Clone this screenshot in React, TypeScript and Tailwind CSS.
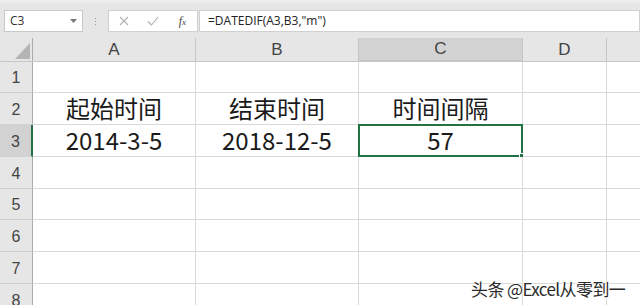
import React from 'react';

const cols = [
  { key: 'A', w: 'w-[163px]' },
  { key: 'B', w: 'w-[163px]' },
  { key: 'C', w: 'w-[164px]' },
  { key: 'D', w: 'w-[84px]' },
  { key: 'E', w: 'flex-1' },
];

const rowHeights = ['h-[31px]', 'h-[32px]', 'h-[32px]', 'h-[32px]', 'h-[31px]', 'h-[32px]', 'h-[32px]', 'h-[32px]'];

const data: Record<string, string> = {
  A2: '起始时间',
  B2: '结束时间',
  C2: '时间间隔',
  A3: '2014-3-5',
  B3: '2018-12-5',
  C3: '57',
};

const font = { fontFamily: '"Noto Sans CJK SC", "Noto Sans", sans-serif' };

const App: React.FC = () => {
  return (
    <div className="w-[640px] h-[305px] overflow-hidden bg-white relative" style={font}>
      {/* FORMULA BAR */}
      <div className="h-[38px] bg-[#e6e6e6] border-t-[3px] border-[#ececec] flex items-start pt-[7px] pl-[4px]">
        <div className="w-[79px] h-[22px] bg-white border border-[#c8c8c8] flex items-center justify-between px-[5px]">
          <span className="text-[12px] text-[#333]" style={{ fontFamily: '"Open Sans", sans-serif' }}>C3</span>
          <svg width="7" height="4" viewBox="0 0 7 4"><path d="M0 0h7L3.5 4z" fill="#777" /></svg>
        </div>
        <div className="w-[25px] h-[22px] flex flex-col items-center justify-center gap-[2px]">
          <span className="w-[1px] h-[1px] bg-[#999]" />
          <span className="w-[1px] h-[1px] bg-[#999]" />
          <span className="w-[1px] h-[1px] bg-[#999]" />
        </div>
        <div className="w-[90px] h-[22px] bg-white border border-[#d0d0d0] flex items-center">
          <div className="w-[30px] flex justify-center">
            <svg width="10" height="10" viewBox="0 0 10 10"><path d="M1 1l8 8M9 1l-8 8" stroke="#b0b0b0" strokeWidth="1.1" /></svg>
          </div>
          <div className="w-[30px] flex justify-center">
            <svg width="12" height="10" viewBox="0 0 12 10"><path d="M1 5.5l3.5 3.5L11 1" stroke="#b0b0b0" strokeWidth="1.1" fill="none" /></svg>
          </div>
          <div className="w-[30px] flex justify-center">
            <span className="text-[12px] italic text-[#444]" style={{ fontFamily: '"Liberation Serif", serif' }}>f<span className="text-[9px]">x</span></span>
          </div>
        </div>
        <div className="ml-[1px] flex-1 h-[22px] bg-white border border-[#d0d0d0] flex items-center pl-[8px]">
          <span className="text-[12px] text-[#222]" style={{ fontFamily: '"Open Sans", sans-serif' }}>=DATEDIF(A3,B3,"m")</span>
        </div>
      </div>

      {/* COLUMN HEADERS */}
      <div className="flex h-[24px] bg-[#e6e6e6] border-b border-[#c6c6c6]">
        <div className="w-[33px] border-r border-[#ababab] flex items-end justify-end pr-[2px] pb-[2px]">
          <svg width="15" height="16" viewBox="0 0 15 16"><path d="M15 0V16H0z" fill="#b4b4b4" /></svg>
        </div>
        {cols.map(c => (
          <div
            key={c.key}
            className={`${c.w} flex items-center justify-center text-[17px] text-[#444] ${
              c.key === 'C' ? 'bg-[#d2d2d2] border-b-2 border-[#217346] -mb-px' : ''
            } ${c.key !== 'E' ? 'border-r border-[#c6c6c6]' : ''}`}
            style={{ fontFamily: '"Liberation Sans", sans-serif' }}
          >
            {c.key !== 'E' ? c.key : ''}
          </div>
        ))}
      </div>

      {/* GRID ROWS */}
      {rowHeights.map((h, i) => {
        const r = i + 1;
        return (
          <div key={r} className={`flex ${h}`}>
            <div
              className={`w-[33px] flex items-end justify-center pb-[2px] text-[16px] text-[#444] border-b border-[#d0d0d0] ${
                r === 3 ? 'bg-[#d2d2d2] border-r-2 border-r-[#217346]' : 'bg-[#e6e6e6] border-r border-r-[#ababab]'
              }`}
              style={{ fontFamily: '"Liberation Sans", sans-serif' }}
            >
              {r}
            </div>
            {cols.map(c => {
              const id = `${c.key}${r}`;
              const selected = id === 'C3';
              return (
                <div
                  key={id}
                  className={`${c.w} relative flex items-end justify-center text-[24px] leading-[32px] text-[#1a1a1a] border-b border-[#d9d9d9] ${
                    c.key !== 'E' ? 'border-r' : ''
                  } border-r-[#d9d9d9]`}
                >
                  {data[id] ?? ''}
                  {selected && (
                    <div className="absolute -left-px -top-px right-[-1px] bottom-[-1px] border-2 border-[#217346]">
                      <span className="absolute -right-[3px] -bottom-[3px] w-[5px] h-[5px] bg-[#217346] border border-white" />
                    </div>
                  )}
                </div>
              );
            })}
          </div>
        );
      })}

      {/* WATERMARK */}
      <div
        className="absolute left-[471px] top-[276px] text-[17px] text-[#2a2a2a] tracking-[-0.6px]"
        style={{ textShadow: '1px 1px 1px #fff, -1px -1px 1px #fff' }}
      >
        头条 @Excel从零到一
      </div>
    </div>
  );
};

export default App;
